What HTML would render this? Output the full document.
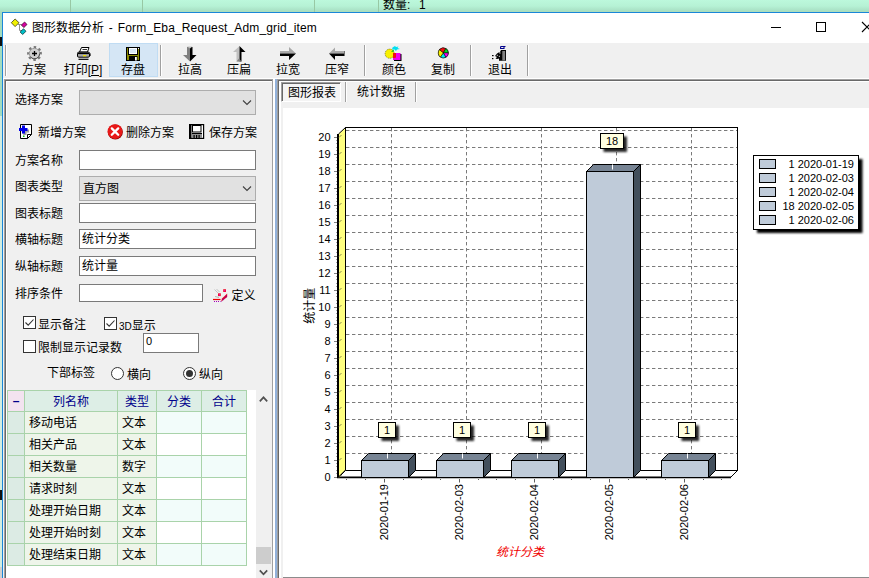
<!DOCTYPE html>
<html lang="zh-CN">
<head>
<meta charset="utf-8">
<title>图形数据分析</title>
<style>
*{box-sizing:border-box;margin:0;padding:0}
html,body{width:869px;height:578px;overflow:hidden}
body{position:relative;background:#b9f2d3;font-family:"Liberation Sans","Noto Sans CJK SC",sans-serif;font-size:12px;color:#000;line-height:14px}
.abs{position:absolute}
.t{position:absolute;white-space:nowrap;line-height:14px;height:14px}
#bgtop{left:0;top:0;width:869px;height:12px;background:linear-gradient(#bcf8dc 0%,#b6f2d5 50%,#a8e0c4 90%,#b0dcb8 100%)}
.bgl{position:absolute;top:0;width:1px;height:12px;background:#98c8a4}
#win{left:2px;top:12px;width:880px;height:580px;background:#f0f0f0;border:1px solid #1a86d8}
#title{left:3px;top:13px;width:866px;height:30px;background:#fff}
#toolbar{left:3px;top:43px;width:866px;height:36px;background:#f0f0f0}
.tb{position:absolute;top:63px;height:14px;line-height:14px;white-space:nowrap;font-size:12px;text-align:center}
.sep{position:absolute;top:45px;width:2px;height:31px;border-left:1px solid #a0a0a0;border-right:1px solid #fff}
.inp{position:absolute;background:#fff;border:1px solid #7a7a7a;height:20px}
.cmb{position:absolute;background:#e1e1e1;border:1px solid #adadad}
.lbl{margin-top:1px;position:absolute;white-space:nowrap;line-height:14px;height:14px;font-size:12px}
.cb{position:absolute;width:13px;height:13px;border:1px solid #333;background:#fff}
.rd{position:absolute;width:13px;height:13px;border:1px solid #333;background:#fff;border-radius:50%}
#grid{left:7px;top:390px;width:240px;height:176px}
.gh{position:absolute;top:390px;height:22px;border:1px solid #a9d3aa;background:#ddeee6;color:#00008b;text-align:center;line-height:20px;padding-top:1px;font-size:12px}
.gc{position:absolute;height:23px;border:1px solid #a9d3aa;line-height:21px;font-size:12px;padding-left:4px;padding-top:1px;white-space:nowrap}
</style>
</head>
<body>
<div class="abs" id="bgtop"></div>
<div class="bgl" style="left:70px"></div><div class="bgl" style="left:142px"></div><div class="bgl" style="left:314px"></div><div class="bgl" style="left:378px"></div>
<div class="t" style="left:383px;top:-2px;font-size:12px">数量<span style="letter-spacing:2.700px">: </span>1</div>
<div class="abs" style="left:0;top:12px;width:2px;height:104px;background:#a3dcbf"></div><div class="abs" style="left:0;top:116px;width:2px;height:451px;background:#d2ede1"></div><div class="abs" style="left:0;top:567px;width:2px;height:11px;background:#d0d0d0"></div>
<div class="abs" style="left:0;top:37px;width:2px;height:9px;background:#101010"></div><div class="abs" style="left:0;top:490px;width:2px;height:10px;background:#101010"></div>
<div class="abs" id="win"></div>
<div class="abs" id="title"></div>
<!-- title icon -->
<svg class="abs" style="left:10px;top:18px" width="20" height="20" viewBox="10 18 20 20">
<path d="M18 24.500 H22 M19.500 24.500 V30.500 H22" fill="none" stroke="#909090" stroke-width="1"/>
<path d="M11.300 22.700 L15.100 19 L19 22.700 L15.100 26.600 Z" fill="#f0f000" stroke="#202000" stroke-width="0.700"/>
<path d="M21.400 25 L24.600 22 L27 24.500 L23.800 27.600 Z" fill="#d800a0" stroke="#300020" stroke-width="0.700"/>
<path d="M20.100 32 L23.500 28.800 L26 31.300 L22.600 34.500 Z" fill="#00c0c8" stroke="#002828" stroke-width="0.700"/>
</svg>
<div class="t" id="ttext" style="left:32px;top:20px;font-size:12px;line-height:16px;height:16px">图形数据分析<span style="letter-spacing:0.15px;word-spacing:1.3px"> - Form_Eba_Request_Adm_grid_item</span></div>
<!-- window buttons -->
<div class="abs" style="left:771px;top:27px;width:10px;height:1px;background:#000"></div>
<div class="abs" style="left:816px;top:22px;width:10px;height:10px;border:1px solid #000"></div>
<svg class="abs" style="left:861px;top:21px" width="12" height="12"><path d="M1 1 L11 11 M11 1 L1 11" stroke="#000" stroke-width="1.1" fill="none"/></svg>

<div class="abs" id="toolbar"></div>
<div class="abs" style="left:5px;top:45px;width:2px;height:31px;border-left:1px solid #a0a0a0;border-right:1px solid #fff"></div>
<div class="abs" style="left:109px;top:43px;width:49px;height:34px;background:#d5e6f5;border:1px solid #c0dcf3"></div>
<div class="tb" style="left:10px;width:48px">方案</div>
<div class="tb" style="left:59px;width:48px">打印[<u>P</u>]</div>
<div class="tb" style="left:109px;width:48px">存盘</div>
<div class="tb" style="left:166px;width:48px">拉高</div>
<div class="tb" style="left:215px;width:48px">压扁</div>
<div class="tb" style="left:264px;width:48px">拉宽</div>
<div class="tb" style="left:313px;width:48px">压窄</div>
<div class="tb" style="left:370px;width:48px">颜色</div>
<div class="tb" style="left:419px;width:48px">复制</div>
<div class="tb" style="left:476px;width:48px">退出</div>
<div class="sep" style="left:160px"></div>
<div class="sep" style="left:364px"></div>
<div class="sep" style="left:470px"></div>
<div class="sep" style="left:527px"></div>
<!-- toolbar icons -->
<svg class="abs" id="tbicons" style="left:0;top:43px" width="560" height="20" viewBox="0 43 560 20">
<!-- 方案 gear -->
<circle cx="34.500" cy="53.500" r="6.300" fill="none" stroke="#787878" stroke-width="2.200" stroke-dasharray="2.400 2.550" transform="rotate(-14 34.500 53.500)"/>
<circle cx="34.500" cy="53.500" r="5.200" fill="#cfcfcf" stroke="#8a8a8a" stroke-width="0.800"/>
<path d="M30.500 57 A5.200 5.200 0 0 0 39.700 53.500" fill="none" stroke="#505050" stroke-width="1"/>
<path d="M34.500 51 V56 M32 53.500 H37" stroke="#000" stroke-width="1.300" fill="none"/>
<!-- 打印 printer -->
<path d="M81.500 47.500 H89 L87.500 52 H79.500 Z" fill="#fff" stroke="#000" stroke-width="1"/>
<path d="M82.500 49.500 H87" stroke="#000" stroke-width="0.800"/>
<rect x="77.500" y="52.200" width="12" height="5" rx="1.200" fill="#a8a8a8" stroke="#000" stroke-width="1"/>
<path d="M78 53.500 H89" stroke="#000" stroke-width="1.200"/>
<rect x="83" y="55" width="3.200" height="1.300" fill="#f0e000"/>
<path d="M89.500 52.500 L90.500 54 V56" stroke="#404040" stroke-width="0.800" fill="none"/>
<path d="M78.500 59.300 H88.500" stroke="#000" stroke-width="1.200"/>
<!-- 存盘 floppy -->
<rect x="126.500" y="47.500" width="13" height="13" fill="#8c8c00" stroke="#000" stroke-width="1"/>
<rect x="128" y="47" width="10" height="8" fill="#000"/>
<rect x="129" y="48" width="8" height="6" fill="#fff"/>
<rect x="130" y="49" width="6" height="4" fill="#d8e6f2"/>
<rect x="138" y="48" width="1" height="1" fill="#fff"/>
<rect x="129" y="56" width="8.500" height="4.500" fill="#000"/>
<rect x="135" y="57" width="1.800" height="3.500" fill="#fff"/>
<!-- 拉高 down arrow -->
<path d="M187 47 H190 V61.500 L183 55 H187 Z" fill="#808080"/>
<path d="M190 47 H192.500 V55 H196.500 L190 61.500 Z" fill="#000"/>
<path d="M187 46.500 H192.500 L190 48.500 Z" fill="#c0c0c0"/>
<!-- 压扁 up arrow -->
<path d="M239.500 46 L233 52 H236.500 V61.500 H239.500 Z" fill="#c0c0c0"/>
<path d="M239.500 46 L245.500 52 H241.500 V61.500 H239.500 Z" fill="#000"/>
<path d="M236.500 61.500 L239 58.500 L241.500 61.500 Z" fill="#808080"/>
<!-- 拉宽 right arrow -->
<path d="M280 51 H289 V47 L296 53.600 H280 Z" fill="#a8a8a8"/>
<path d="M280 53.600 H296 L289 60 V56 H280 Z" fill="#000"/>
<!-- 压窄 left arrow -->
<path d="M345 51 H335 V47.500 L329 53.600 H345 Z" fill="#a8a8a8"/>
<path d="M345 53.600 H329 L335 60 V56 H345 Z" fill="#000"/>
<path d="M344 51 H345 V56 H344 Z" fill="#707070"/>
<!-- 颜色 -->
<rect x="394" y="54" width="7.500" height="7" fill="#000"/>
<rect x="393" y="53" width="7.500" height="7" fill="#f000f0"/>
<circle cx="389.700" cy="53.700" r="4.600" fill="#f8f000" stroke="#505000" stroke-width="0.700" stroke-dasharray="1 1"/>
<path d="M393 53 H396 V57.500 A4.600 4.600 0 0 1 393 58 Z" fill="#f01010"/>
<path d="M391 52 L393.500 49.500 L394 51.500 Z" fill="#00c020"/>
<path d="M392.500 47.500 L395 46 L396 47 L398.500 46.500 L397.500 48 L400 49 L397 49.500 L396 51 L394.500 49.500 L392 49.500 Z" fill="#00e0f0"/>
<!-- 复制 pie -->
<circle cx="443.3" cy="52.9" r="5.400" fill="#303030"/>
<path d="M443.3 52.9 L439.47 49.69 A5 5 0 0 1 445.80 48.57 Z" fill="#f01010" stroke="#000" stroke-width="0.500"/>
<path d="M443.3 52.9 L445.80 48.57 A5 5 0 0 1 448.30 52.90 Z" fill="#00d820" stroke="#000" stroke-width="0.500"/>
<path d="M443.3 52.9 L448.30 52.90 A5 5 0 0 1 445.80 57.23 Z" fill="#f000f0" stroke="#000" stroke-width="0.500"/>
<path d="M443.3 52.9 L445.80 57.23 A5 5 0 0 1 440.43 57.00 Z" fill="#00e8f0" stroke="#000" stroke-width="0.500"/>
<path d="M443.3 52.9 L440.43 57.00 A5 5 0 0 1 439.47 49.69 Z" fill="#f8f000" stroke="#000" stroke-width="0.500"/>
<!-- 退出 door -->
<path d="M500.600 46.500 H505.500 M500.600 46.500 V48.500 H504 V46.500" fill="none" stroke="#00008b" stroke-width="1.100"/>
<path d="M499 60.700 V54 L501 50 H506 V60.700 Z" fill="#000"/>
<rect x="502.300" y="51" width="2.800" height="9.500" fill="#808080"/>
<path d="M495 56 L497 53.500 L499.500 52 V58.500 L497 59 L495.500 58.500 L497 57 Z" fill="#000"/>
<rect x="499.500" y="52.500" width="1" height="1" fill="#fff"/><rect x="496.800" y="54.800" width="1" height="1" fill="#fff"/><rect x="498.800" y="55.800" width="1" height="1" fill="#fff"/>
<rect x="492" y="55" width="1.600" height="1.200" fill="#000"/><rect x="492" y="58" width="1.400" height="1.200" fill="#000"/>
</svg>

<!-- left panel -->
<div class="abs" style="left:4px;top:79px;width:269px;height:505px;border-left:1px solid #a0a0a0;border-top:1px solid #a0a0a0;border-right:1px solid #a0a0a0;box-shadow:inset 1px 1px 0 #696969,inset 2px 2px 0 #fff"></div>
<div class="lbl" style="left:15px;top:92px">选择方案</div>
<div class="cmb" style="left:79px;top:90px;width:177px;height:25px"></div>
<svg class="abs" style="left:242px;top:99px" width="10" height="8"><path d="M1 1.500 L5 5.500 L9 1.500" fill="none" stroke="#404040" stroke-width="1.1"/></svg>

<!-- 新增/删除/保存 -->
<svg class="abs" style="left:17px;top:122px" width="18" height="18" viewBox="17 122 18 18">
<path d="M20.500 124.500 H31.500 V134.500 L27.500 138.500 H20.500 Z" fill="#fff" stroke="#000" stroke-width="1"/>
<path d="M27.500 138.500 V134.500 H31.500" fill="none" stroke="#000" stroke-width="1"/>
<path d="M20.500 129.500 H29 V132.500 H26.500 V135 H23.500" fill="#a0a0a0"/>
<path d="M19 128 H22 V125.500 H25 V128 H27.500 V131 H25 V133.500 H22 V131 H19 Z" fill="#0000e8"/>
<rect x="23" y="135.500" width="1.500" height="1.500" fill="#00c000"/>
</svg>
<div class="lbl" style="left:38px;top:125px">新增方案</div>
<svg class="abs" style="left:106px;top:122px" width="19" height="19" viewBox="106 122 19 19">
<circle cx="115.300" cy="132" r="7.600" fill="#900000"/>
<circle cx="115" cy="131.600" r="7.400" fill="#e81818"/>
<path d="M111.800 128.400 L118.200 134.800 M118.200 128.400 L111.800 134.800" stroke="#fff" stroke-width="2.300" stroke-linecap="round"/>
</svg>
<div class="lbl" style="left:126px;top:125px">删除方案</div>
<svg class="abs" style="left:188px;top:122px" width="18" height="19" viewBox="188 122 18 19">
<rect x="189.600" y="124.600" width="14" height="13.800" fill="#fff" stroke="#000" stroke-width="1.200"/>
<rect x="190" y="125" width="1.500" height="13" fill="#000"/>
<rect x="192.500" y="125.500" width="8.500" height="6.500" fill="#fff" stroke="#000" stroke-width="1"/>
<rect x="192" y="134" width="10" height="4" fill="#909090"/>
<path d="M192 133.500 H202" stroke="#000" stroke-width="1"/>
<rect x="193.500" y="135" width="1.200" height="3" fill="#000"/><rect x="196" y="135" width="1.200" height="3" fill="#000"/><rect x="198.500" y="135" width="1.200" height="3" fill="#000"/>
</svg>
<div class="lbl" style="left:209px;top:125px">保存方案</div>

<div class="lbl" style="left:15px;top:153px">方案名称</div>
<div class="inp" style="left:79px;top:150px;width:177px"></div>
<div class="lbl" style="left:15px;top:179px">图表类型</div>
<div class="cmb" style="left:79px;top:176px;width:177px;height:25px"></div>
<div class="lbl" style="left:83px;top:181px">直方图</div>
<svg class="abs" style="left:242px;top:185px" width="10" height="8"><path d="M1 1.500 L5 5.500 L9 1.500" fill="none" stroke="#404040" stroke-width="1.1"/></svg>
<div class="lbl" style="left:15px;top:206px">图表标题</div>
<div class="inp" style="left:79px;top:203px;width:177px"></div>
<div class="lbl" style="left:15px;top:232px">横轴标题</div>
<div class="inp" style="left:79px;top:229px;width:177px"></div>
<div class="lbl" style="left:82px;top:231px">统计分类</div>
<div class="lbl" style="left:15px;top:259px">纵轴标题</div>
<div class="inp" style="left:79px;top:256px;width:177px"></div>
<div class="lbl" style="left:82px;top:258px">统计量</div>
<div class="lbl" style="left:15px;top:286px">排序条件</div>
<div class="inp" style="left:79px;top:284px;width:124px;height:18px"></div>
<svg class="abs" style="left:212px;top:287px" width="17" height="16" viewBox="212 287 17 16">
<path d="M214.500 289.500 L218 293 M216.500 289 L219.500 292" stroke="#c4c4c4" stroke-width="1" fill="none"/>
<path d="M215 296.500 L219 297.500" stroke="#b4b4b4" stroke-width="1" fill="none"/>
<rect x="218" y="293.300" width="2.800" height="2.800" fill="#f01030"/><rect x="219" y="294.300" width="1" height="1" fill="#f000f0"/>
<rect x="223.200" y="289.200" width="2.800" height="2.800" fill="#f01030"/><rect x="224.200" y="290.200" width="1" height="1" fill="#f000f0"/>
<path d="M213 299.500 H220.500" stroke="#f00000" stroke-width="1.200"/>
<path d="M214 301.500 H220.500" stroke="#a000c0" stroke-width="1" stroke-dasharray="1 1"/>
<path d="M221 301.800 L222 298.500 L227.200 293.600 V297 Z" fill="#e80028"/>
<path d="M222 300 L227 295.300 M221.600 301.500 L227 296.500" stroke="#5000c0" stroke-width="0.600" stroke-dasharray="1 1"/>
</svg>
<div class="lbl" style="left:231.500px;top:288px">定义</div>

<div class="cb" style="left:23px;top:316px"></div>
<svg class="abs" style="left:24px;top:317px" width="11" height="11"><path d="M1.500 5.500 L4.200 8.200 L9.500 2.500" fill="none" stroke="#333" stroke-width="1.100"/></svg>
<div class="lbl" style="left:38px;top:317px">显示备注</div>
<div class="cb" style="left:104px;top:317px"></div>
<svg class="abs" style="left:105px;top:318px" width="11" height="11"><path d="M1.500 5.500 L4.200 8.200 L9.500 2.500" fill="none" stroke="#333" stroke-width="1.100"/></svg>
<div class="lbl" style="left:119px;top:318px"><span style="font-size:10px">3D</span>显示</div>
<div class="cb" style="left:23px;top:340px"></div>
<div class="lbl" style="left:38px;top:340px">限制显示记录数</div>
<div class="inp" style="left:143px;top:333px;width:56px;height:20px"></div>
<div class="lbl" style="left:146px;top:333px;font-size:11px">0</div>
<div class="lbl" style="left:47px;top:365px">下部标签</div>
<div class="rd" style="left:111px;top:367px"></div>
<div class="lbl" style="left:127px;top:367px">横向</div>
<div class="rd" style="left:183px;top:367px"></div>
<div class="abs" style="left:186px;top:370px;width:7px;height:7px;border-radius:50%;background:#333"></div>
<div class="lbl" style="left:199px;top:367px">纵向</div>

<!-- grid -->
<div class="abs" style="left:7px;top:390px;width:265px;height:190px;background:#fff"></div>

<div class="gh" style="left:7px;width:18px;background:#f3e3f0;line-height:18px;font-weight:bold">–</div>
<div class="gh" style="left:24px;width:94px;background:#ddeee6">列名称</div>
<div class="gh" style="left:117px;width:40px;background:#ddeee6">类型</div>
<div class="gh" style="left:156px;width:46px;background:#ddeee6">分类</div>
<div class="gh" style="left:201px;width:46px;background:#ddeee6">合计</div>
<div class="gc" style="left:7px;top:411px;width:18px;background:#dcebe4"></div>
<div class="gc" style="left:24px;top:411px;width:94px;background:#eef5ea">移动电话</div>
<div class="gc" style="left:117px;top:411px;width:40px;background:#eef5ea">文本</div>
<div class="gc" style="left:156px;top:411px;width:46px;background:#f2fcfa"></div>
<div class="gc" style="left:201px;top:411px;width:46px;background:#f2fcfa"></div>
<div class="gc" style="left:7px;top:433px;width:18px;background:#dcebe4"></div>
<div class="gc" style="left:24px;top:433px;width:94px;background:#eef5ea">相关产品</div>
<div class="gc" style="left:117px;top:433px;width:40px;background:#eef5ea">文本</div>
<div class="gc" style="left:156px;top:433px;width:46px;background:#ffffff"></div>
<div class="gc" style="left:201px;top:433px;width:46px;background:#ffffff"></div>
<div class="gc" style="left:7px;top:455px;width:18px;background:#dcebe4"></div>
<div class="gc" style="left:24px;top:455px;width:94px;background:#eef5ea">相关数量</div>
<div class="gc" style="left:117px;top:455px;width:40px;background:#eef5ea">数字</div>
<div class="gc" style="left:156px;top:455px;width:46px;background:#f2fcfa"></div>
<div class="gc" style="left:201px;top:455px;width:46px;background:#f2fcfa"></div>
<div class="gc" style="left:7px;top:477px;width:18px;background:#dcebe4"></div>
<div class="gc" style="left:24px;top:477px;width:94px;background:#eef5ea">请求时刻</div>
<div class="gc" style="left:117px;top:477px;width:40px;background:#eef5ea">文本</div>
<div class="gc" style="left:156px;top:477px;width:46px;background:#ffffff"></div>
<div class="gc" style="left:201px;top:477px;width:46px;background:#ffffff"></div>
<div class="gc" style="left:7px;top:499px;width:18px;background:#dcebe4"></div>
<div class="gc" style="left:24px;top:499px;width:94px;background:#eef5ea">处理开始日期</div>
<div class="gc" style="left:117px;top:499px;width:40px;background:#eef5ea">文本</div>
<div class="gc" style="left:156px;top:499px;width:46px;background:#f2fcfa"></div>
<div class="gc" style="left:201px;top:499px;width:46px;background:#f2fcfa"></div>
<div class="gc" style="left:7px;top:521px;width:18px;background:#dcebe4"></div>
<div class="gc" style="left:24px;top:521px;width:94px;background:#eef5ea">处理开始时刻</div>
<div class="gc" style="left:117px;top:521px;width:40px;background:#eef5ea">文本</div>
<div class="gc" style="left:156px;top:521px;width:46px;background:#ffffff"></div>
<div class="gc" style="left:201px;top:521px;width:46px;background:#ffffff"></div>
<div class="gc" style="left:7px;top:543px;width:18px;background:#dcebe4"></div>
<div class="gc" style="left:24px;top:543px;width:94px;background:#eef5ea">处理结束日期</div>
<div class="gc" style="left:117px;top:543px;width:40px;background:#eef5ea">文本</div>
<div class="gc" style="left:156px;top:543px;width:46px;background:#f2fcfa"></div>
<div class="gc" style="left:201px;top:543px;width:46px;background:#f2fcfa"></div>

<!-- scrollbar -->
<div class="abs" style="left:256px;top:390px;width:16px;height:190px;background:#f0f0f0"></div>
<svg class="abs" style="left:258px;top:394px" width="12" height="10"><path d="M1.800 7.300 L5.500 3.300 L9.200 7.300" fill="none" stroke="#505050" stroke-width="1.700"/></svg>
<svg class="abs" style="left:258px;top:568px" width="12" height="10"><path d="M1.800 2.300 L5.500 6.300 L9.200 2.300" fill="none" stroke="#505050" stroke-width="1.700"/></svg>
<div class="abs" style="left:256px;top:547px;width:15px;height:17px;background:#cdcdcd"></div>

<!-- splitter -->
<div class="abs" style="left:273px;top:79px;width:2px;height:500px;background:#fff"></div>
<div class="abs" style="left:3px;top:78px;width:866px;height:1px;background:#fff"></div>
<div class="abs" style="left:275px;top:79px;width:2px;height:500px;background:#92b1da"></div>
<!-- right panel -->
<div class="abs" style="left:277px;top:79px;width:600px;height:510px;border-left:1px solid #a0a0a0;border-top:1px solid #a0a0a0;box-shadow:inset 1px 1px 0 #696969,inset 3px 2px 0 #fff;background:#f0f0f0"></div>
<div class="abs" style="left:281px;top:82px;width:60px;height:20px;border-left:1px solid #a0a0a0;border-top:1px solid #a0a0a0;border-right:1px solid #fff;border-bottom:1px solid #fff;background:#f4f4f4"></div>
<div class="abs" style="left:282px;top:83px;width:58px;height:18px;border-left:1px solid #696969;border-top:1px solid #696969"></div>
<div class="lbl" style="left:288px;top:85px">图形报表</div>
<div class="lbl" style="left:357px;top:84px">统计数据</div>
<div class="abs" style="left:345px;top:82px;width:2px;height:20px;border-left:1px solid #a0a0a0;border-right:1px solid #fff"></div>
<div class="abs" style="left:415px;top:82px;width:2px;height:20px;border-left:1px solid #a0a0a0;border-right:1px solid #fff"></div>
<div class="abs" style="left:283px;top:108px;width:590px;height:469px;background:#fff"></div>
<div class="abs" style="left:283px;top:577px;width:590px;height:1px;background:#8c8c8c"></div>
<svg class="abs" id="chart" style="left:283px;top:107px" width="586" height="470" viewBox="283 107 586 470" font-family="'Liberation Sans','Noto Sans CJK SC',sans-serif" font-size="11">
<rect x="345.5" y="127.5" width="392" height="343" fill="#fff" stroke="#000" stroke-width="1"/>
<path d="M346 453.5 H737" stroke="#7a7a7a" stroke-width="1" stroke-dasharray="3.400 2.600" fill="none"/>
<path d="M346 436.5 H737" stroke="#7a7a7a" stroke-width="1" stroke-dasharray="3.400 2.600" fill="none"/>
<path d="M346 419.5 H737" stroke="#7a7a7a" stroke-width="1" stroke-dasharray="3.400 2.600" fill="none"/>
<path d="M346 402.5 H737" stroke="#7a7a7a" stroke-width="1" stroke-dasharray="3.400 2.600" fill="none"/>
<path d="M346 385.5 H737" stroke="#7a7a7a" stroke-width="1" stroke-dasharray="3.400 2.600" fill="none"/>
<path d="M346 368.5 H737" stroke="#7a7a7a" stroke-width="1" stroke-dasharray="3.400 2.600" fill="none"/>
<path d="M346 351.5 H737" stroke="#7a7a7a" stroke-width="1" stroke-dasharray="3.400 2.600" fill="none"/>
<path d="M346 334.5 H737" stroke="#7a7a7a" stroke-width="1" stroke-dasharray="3.400 2.600" fill="none"/>
<path d="M346 317.5 H737" stroke="#7a7a7a" stroke-width="1" stroke-dasharray="3.400 2.600" fill="none"/>
<path d="M346 300.5 H737" stroke="#7a7a7a" stroke-width="1" stroke-dasharray="3.400 2.600" fill="none"/>
<path d="M346 283.5 H737" stroke="#7a7a7a" stroke-width="1" stroke-dasharray="3.400 2.600" fill="none"/>
<path d="M346 266.5 H737" stroke="#7a7a7a" stroke-width="1" stroke-dasharray="3.400 2.600" fill="none"/>
<path d="M346 249.5 H737" stroke="#7a7a7a" stroke-width="1" stroke-dasharray="3.400 2.600" fill="none"/>
<path d="M346 232.5 H737" stroke="#7a7a7a" stroke-width="1" stroke-dasharray="3.400 2.600" fill="none"/>
<path d="M346 215.5 H737" stroke="#7a7a7a" stroke-width="1" stroke-dasharray="3.400 2.600" fill="none"/>
<path d="M346 198.5 H737" stroke="#7a7a7a" stroke-width="1" stroke-dasharray="3.400 2.600" fill="none"/>
<path d="M346 181.5 H737" stroke="#7a7a7a" stroke-width="1" stroke-dasharray="3.400 2.600" fill="none"/>
<path d="M346 164.5 H737" stroke="#7a7a7a" stroke-width="1" stroke-dasharray="3.400 2.600" fill="none"/>
<path d="M346 147.5 H737" stroke="#7a7a7a" stroke-width="1" stroke-dasharray="3.400 2.600" fill="none"/>
<path d="M346 130.5 H737" stroke="#7a7a7a" stroke-width="1" stroke-dasharray="3.400 2.600" fill="none"/>
<path d="M391.5 128 V470" stroke="#7a7a7a" stroke-width="1" stroke-dasharray="3.400 2.600" fill="none"/>
<path d="M466.5 128 V470" stroke="#7a7a7a" stroke-width="1" stroke-dasharray="3.400 2.600" fill="none"/>
<path d="M541.5 128 V470" stroke="#7a7a7a" stroke-width="1" stroke-dasharray="3.400 2.600" fill="none"/>
<path d="M616.5 128 V470" stroke="#7a7a7a" stroke-width="1" stroke-dasharray="3.400 2.600" fill="none"/>
<path d="M691.5 128 V470" stroke="#7a7a7a" stroke-width="1" stroke-dasharray="3.400 2.600" fill="none"/>
<path d="M338.5 134 L345.5 127.5 V470 L338.5 477 Z" fill="#ffff80" stroke="#000" stroke-width="1"/>
<path d="M338 134 V478" stroke="#000" stroke-width="2"/>
<path d="M338.5 477.5 L345.5 470.5 H737.5 L730.5 477.5 Z" fill="#fff" stroke="#000" stroke-width="1"/>
<path d="M337 477.4 H731" stroke="#000" stroke-width="1.8"/>
<path d="M334 477.5 H337" stroke="#808080" stroke-width="1"/>
<text x="330.6" y="481" text-anchor="end">0</text>
<path d="M339 477.5 L341.5 475" stroke="#8c8c50" stroke-width="1"/>
<rect x="336" y="473" width="1" height="1" fill="#a8a8a8"/>
<rect x="336" y="470" width="1" height="1" fill="#a8a8a8"/>
<rect x="336" y="466" width="1" height="1" fill="#a8a8a8"/>
<rect x="336" y="463" width="1" height="1" fill="#a8a8a8"/>
<path d="M334 460.5 H337" stroke="#808080" stroke-width="1"/>
<text x="330.6" y="464" text-anchor="end">1</text>
<path d="M339 460.5 L341.5 458" stroke="#8c8c50" stroke-width="1"/>
<rect x="336" y="456" width="1" height="1" fill="#a8a8a8"/>
<rect x="336" y="453" width="1" height="1" fill="#a8a8a8"/>
<rect x="336" y="449" width="1" height="1" fill="#a8a8a8"/>
<rect x="336" y="446" width="1" height="1" fill="#a8a8a8"/>
<path d="M334 443.5 H337" stroke="#808080" stroke-width="1"/>
<text x="330.6" y="447" text-anchor="end">2</text>
<path d="M339 443.5 L341.5 441" stroke="#8c8c50" stroke-width="1"/>
<rect x="336" y="439" width="1" height="1" fill="#a8a8a8"/>
<rect x="336" y="436" width="1" height="1" fill="#a8a8a8"/>
<rect x="336" y="432" width="1" height="1" fill="#a8a8a8"/>
<rect x="336" y="429" width="1" height="1" fill="#a8a8a8"/>
<path d="M334 426.5 H337" stroke="#808080" stroke-width="1"/>
<text x="330.6" y="430" text-anchor="end">3</text>
<path d="M339 426.5 L341.5 424" stroke="#8c8c50" stroke-width="1"/>
<rect x="336" y="422" width="1" height="1" fill="#a8a8a8"/>
<rect x="336" y="419" width="1" height="1" fill="#a8a8a8"/>
<rect x="336" y="415" width="1" height="1" fill="#a8a8a8"/>
<rect x="336" y="412" width="1" height="1" fill="#a8a8a8"/>
<path d="M334 409.5 H337" stroke="#808080" stroke-width="1"/>
<text x="330.6" y="413" text-anchor="end">4</text>
<path d="M339 409.5 L341.5 407" stroke="#8c8c50" stroke-width="1"/>
<rect x="336" y="405" width="1" height="1" fill="#a8a8a8"/>
<rect x="336" y="402" width="1" height="1" fill="#a8a8a8"/>
<rect x="336" y="398" width="1" height="1" fill="#a8a8a8"/>
<rect x="336" y="395" width="1" height="1" fill="#a8a8a8"/>
<path d="M334 392.5 H337" stroke="#808080" stroke-width="1"/>
<text x="330.6" y="396" text-anchor="end">5</text>
<path d="M339 392.5 L341.5 390" stroke="#8c8c50" stroke-width="1"/>
<rect x="336" y="388" width="1" height="1" fill="#a8a8a8"/>
<rect x="336" y="385" width="1" height="1" fill="#a8a8a8"/>
<rect x="336" y="381" width="1" height="1" fill="#a8a8a8"/>
<rect x="336" y="378" width="1" height="1" fill="#a8a8a8"/>
<path d="M334 375.5 H337" stroke="#808080" stroke-width="1"/>
<text x="330.6" y="379" text-anchor="end">6</text>
<path d="M339 375.5 L341.5 373" stroke="#8c8c50" stroke-width="1"/>
<rect x="336" y="371" width="1" height="1" fill="#a8a8a8"/>
<rect x="336" y="368" width="1" height="1" fill="#a8a8a8"/>
<rect x="336" y="364" width="1" height="1" fill="#a8a8a8"/>
<rect x="336" y="361" width="1" height="1" fill="#a8a8a8"/>
<path d="M334 358.5 H337" stroke="#808080" stroke-width="1"/>
<text x="330.6" y="362" text-anchor="end">7</text>
<path d="M339 358.5 L341.5 356" stroke="#8c8c50" stroke-width="1"/>
<rect x="336" y="354" width="1" height="1" fill="#a8a8a8"/>
<rect x="336" y="351" width="1" height="1" fill="#a8a8a8"/>
<rect x="336" y="347" width="1" height="1" fill="#a8a8a8"/>
<rect x="336" y="344" width="1" height="1" fill="#a8a8a8"/>
<path d="M334 341.5 H337" stroke="#808080" stroke-width="1"/>
<text x="330.6" y="345" text-anchor="end">8</text>
<path d="M339 341.5 L341.5 339" stroke="#8c8c50" stroke-width="1"/>
<rect x="336" y="337" width="1" height="1" fill="#a8a8a8"/>
<rect x="336" y="334" width="1" height="1" fill="#a8a8a8"/>
<rect x="336" y="330" width="1" height="1" fill="#a8a8a8"/>
<rect x="336" y="327" width="1" height="1" fill="#a8a8a8"/>
<path d="M334 324.5 H337" stroke="#808080" stroke-width="1"/>
<text x="330.6" y="328" text-anchor="end">9</text>
<path d="M339 324.5 L341.5 322" stroke="#8c8c50" stroke-width="1"/>
<rect x="336" y="320" width="1" height="1" fill="#a8a8a8"/>
<rect x="336" y="317" width="1" height="1" fill="#a8a8a8"/>
<rect x="336" y="313" width="1" height="1" fill="#a8a8a8"/>
<rect x="336" y="310" width="1" height="1" fill="#a8a8a8"/>
<path d="M334 307.5 H337" stroke="#808080" stroke-width="1"/>
<text x="330.6" y="311" text-anchor="end">10</text>
<path d="M339 307.5 L341.5 305" stroke="#8c8c50" stroke-width="1"/>
<rect x="336" y="303" width="1" height="1" fill="#a8a8a8"/>
<rect x="336" y="300" width="1" height="1" fill="#a8a8a8"/>
<rect x="336" y="296" width="1" height="1" fill="#a8a8a8"/>
<rect x="336" y="293" width="1" height="1" fill="#a8a8a8"/>
<path d="M334 290.5 H337" stroke="#808080" stroke-width="1"/>
<text x="330.6" y="294" text-anchor="end">11</text>
<path d="M339 290.5 L341.5 288" stroke="#8c8c50" stroke-width="1"/>
<rect x="336" y="286" width="1" height="1" fill="#a8a8a8"/>
<rect x="336" y="283" width="1" height="1" fill="#a8a8a8"/>
<rect x="336" y="279" width="1" height="1" fill="#a8a8a8"/>
<rect x="336" y="276" width="1" height="1" fill="#a8a8a8"/>
<path d="M334 273.5 H337" stroke="#808080" stroke-width="1"/>
<text x="330.6" y="277" text-anchor="end">12</text>
<path d="M339 273.5 L341.5 271" stroke="#8c8c50" stroke-width="1"/>
<rect x="336" y="269" width="1" height="1" fill="#a8a8a8"/>
<rect x="336" y="266" width="1" height="1" fill="#a8a8a8"/>
<rect x="336" y="262" width="1" height="1" fill="#a8a8a8"/>
<rect x="336" y="259" width="1" height="1" fill="#a8a8a8"/>
<path d="M334 256.5 H337" stroke="#808080" stroke-width="1"/>
<text x="330.6" y="260" text-anchor="end">13</text>
<path d="M339 256.5 L341.5 254" stroke="#8c8c50" stroke-width="1"/>
<rect x="336" y="252" width="1" height="1" fill="#a8a8a8"/>
<rect x="336" y="249" width="1" height="1" fill="#a8a8a8"/>
<rect x="336" y="245" width="1" height="1" fill="#a8a8a8"/>
<rect x="336" y="242" width="1" height="1" fill="#a8a8a8"/>
<path d="M334 239.5 H337" stroke="#808080" stroke-width="1"/>
<text x="330.6" y="243" text-anchor="end">14</text>
<path d="M339 239.5 L341.5 237" stroke="#8c8c50" stroke-width="1"/>
<rect x="336" y="235" width="1" height="1" fill="#a8a8a8"/>
<rect x="336" y="232" width="1" height="1" fill="#a8a8a8"/>
<rect x="336" y="228" width="1" height="1" fill="#a8a8a8"/>
<rect x="336" y="225" width="1" height="1" fill="#a8a8a8"/>
<path d="M334 222.5 H337" stroke="#808080" stroke-width="1"/>
<text x="330.6" y="226" text-anchor="end">15</text>
<path d="M339 222.5 L341.5 220" stroke="#8c8c50" stroke-width="1"/>
<rect x="336" y="218" width="1" height="1" fill="#a8a8a8"/>
<rect x="336" y="215" width="1" height="1" fill="#a8a8a8"/>
<rect x="336" y="211" width="1" height="1" fill="#a8a8a8"/>
<rect x="336" y="208" width="1" height="1" fill="#a8a8a8"/>
<path d="M334 205.5 H337" stroke="#808080" stroke-width="1"/>
<text x="330.6" y="209" text-anchor="end">16</text>
<path d="M339 205.5 L341.5 203" stroke="#8c8c50" stroke-width="1"/>
<rect x="336" y="201" width="1" height="1" fill="#a8a8a8"/>
<rect x="336" y="198" width="1" height="1" fill="#a8a8a8"/>
<rect x="336" y="194" width="1" height="1" fill="#a8a8a8"/>
<rect x="336" y="191" width="1" height="1" fill="#a8a8a8"/>
<path d="M334 188.5 H337" stroke="#808080" stroke-width="1"/>
<text x="330.6" y="192" text-anchor="end">17</text>
<path d="M339 188.5 L341.5 186" stroke="#8c8c50" stroke-width="1"/>
<rect x="336" y="184" width="1" height="1" fill="#a8a8a8"/>
<rect x="336" y="181" width="1" height="1" fill="#a8a8a8"/>
<rect x="336" y="177" width="1" height="1" fill="#a8a8a8"/>
<rect x="336" y="174" width="1" height="1" fill="#a8a8a8"/>
<path d="M334 171.5 H337" stroke="#808080" stroke-width="1"/>
<text x="330.6" y="175" text-anchor="end">18</text>
<path d="M339 171.5 L341.5 169" stroke="#8c8c50" stroke-width="1"/>
<rect x="336" y="167" width="1" height="1" fill="#a8a8a8"/>
<rect x="336" y="164" width="1" height="1" fill="#a8a8a8"/>
<rect x="336" y="160" width="1" height="1" fill="#a8a8a8"/>
<rect x="336" y="157" width="1" height="1" fill="#a8a8a8"/>
<path d="M334 154.5 H337" stroke="#808080" stroke-width="1"/>
<text x="330.6" y="158" text-anchor="end">19</text>
<path d="M339 154.5 L341.5 152" stroke="#8c8c50" stroke-width="1"/>
<rect x="336" y="150" width="1" height="1" fill="#a8a8a8"/>
<rect x="336" y="147" width="1" height="1" fill="#a8a8a8"/>
<rect x="336" y="143" width="1" height="1" fill="#a8a8a8"/>
<rect x="336" y="140" width="1" height="1" fill="#a8a8a8"/>
<path d="M334 137.5 H337" stroke="#808080" stroke-width="1"/>
<text x="330.6" y="141" text-anchor="end">20</text>
<path d="M339 137.5 L341.5 135" stroke="#8c8c50" stroke-width="1"/>
<text transform="translate(314.2,323.7) rotate(-90)" font-size="12">统计量</text>
<path d="M361.5 460.5 L368.5 453.5 H415.5 L408.5 460.5 Z" fill="#778494" stroke="#000" stroke-width="1"/>
<path d="M408.5 460.5 L415.5 453.5 V470.5 L408.5 477.5 Z" fill="#424f5c" stroke="#000" stroke-width="1"/>
<rect x="361.5" y="460.5" width="47" height="17.0" fill="#bfcbd9" stroke="#000" stroke-width="1"/>
<text transform="translate(388,540.3) rotate(-90)">2020-01-19</text>
<path d="M387.5 453.5 V458.5" stroke="#fff" stroke-width="1"/>
<rect x="381.5" y="425.5" width="17.5" height="15.5" fill="#000" opacity="0.85" filter="url(#bl)"/>
<rect x="378.5" y="422.5" width="17" height="15" fill="#ffffe1" stroke="#000" stroke-width="1"/>
<text x="387.0" y="434.0" text-anchor="middle">1</text>
<path d="M436.5 460.5 L443.5 453.5 H490.5 L483.5 460.5 Z" fill="#778494" stroke="#000" stroke-width="1"/>
<path d="M483.5 460.5 L490.5 453.5 V470.5 L483.5 477.5 Z" fill="#424f5c" stroke="#000" stroke-width="1"/>
<rect x="436.5" y="460.5" width="47" height="17.0" fill="#bfcbd9" stroke="#000" stroke-width="1"/>
<text transform="translate(463,540.3) rotate(-90)">2020-02-03</text>
<path d="M462.5 453.5 V458.5" stroke="#fff" stroke-width="1"/>
<rect x="456.5" y="425.5" width="17.5" height="15.5" fill="#000" opacity="0.85" filter="url(#bl)"/>
<rect x="453.5" y="422.5" width="17" height="15" fill="#ffffe1" stroke="#000" stroke-width="1"/>
<text x="462.0" y="434.0" text-anchor="middle">1</text>
<path d="M511.5 460.5 L518.5 453.5 H565.5 L558.5 460.5 Z" fill="#778494" stroke="#000" stroke-width="1"/>
<path d="M558.5 460.5 L565.5 453.5 V470.5 L558.5 477.5 Z" fill="#424f5c" stroke="#000" stroke-width="1"/>
<rect x="511.5" y="460.5" width="47" height="17.0" fill="#bfcbd9" stroke="#000" stroke-width="1"/>
<text transform="translate(538,540.3) rotate(-90)">2020-02-04</text>
<path d="M537.5 453.5 V458.5" stroke="#fff" stroke-width="1"/>
<rect x="531.5" y="425.5" width="17.5" height="15.5" fill="#000" opacity="0.85" filter="url(#bl)"/>
<rect x="528.5" y="422.5" width="17" height="15" fill="#ffffe1" stroke="#000" stroke-width="1"/>
<text x="537.0" y="434.0" text-anchor="middle">1</text>
<path d="M586.5 171.5 L593.5 164.5 H640.5 L633.5 171.5 Z" fill="#778494" stroke="#000" stroke-width="1"/>
<path d="M633.5 171.5 L640.5 164.5 V470.5 L633.5 477.5 Z" fill="#424f5c" stroke="#000" stroke-width="1"/>
<rect x="586.5" y="171.5" width="47" height="306.0" fill="#bfcbd9" stroke="#000" stroke-width="1"/>
<text transform="translate(613,540.3) rotate(-90)">2020-02-05</text>
<path d="M612.5 164.5 V169.5" stroke="#fff" stroke-width="1"/>
<rect x="603.5" y="136.5" width="23.5" height="15.5" fill="#000" opacity="0.85" filter="url(#bl)"/>
<rect x="600.5" y="133.5" width="23" height="15" fill="#ffffe1" stroke="#000" stroke-width="1"/>
<text x="612.0" y="145.0" text-anchor="middle">18</text>
<path d="M661.5 460.5 L668.5 453.5 H715.5 L708.5 460.5 Z" fill="#778494" stroke="#000" stroke-width="1"/>
<path d="M708.5 460.5 L715.5 453.5 V470.5 L708.5 477.5 Z" fill="#424f5c" stroke="#000" stroke-width="1"/>
<rect x="661.5" y="460.5" width="47" height="17.0" fill="#bfcbd9" stroke="#000" stroke-width="1"/>
<text transform="translate(688,540.3) rotate(-90)">2020-02-06</text>
<path d="M687.5 453.5 V458.5" stroke="#fff" stroke-width="1"/>
<rect x="681.5" y="425.5" width="17.5" height="15.5" fill="#000" opacity="0.85" filter="url(#bl)"/>
<rect x="678.5" y="422.5" width="17" height="15" fill="#ffffe1" stroke="#000" stroke-width="1"/>
<text x="687.0" y="434.0" text-anchor="middle">1</text>
<path d="M346.5 479 V480" stroke="#606060" stroke-width="1"/>
<path d="M365.5 479 V480" stroke="#606060" stroke-width="1"/>
<path d="M384.5 479 V482.5" stroke="#606060" stroke-width="1"/>
<path d="M403.5 479 V480" stroke="#606060" stroke-width="1"/>
<path d="M421.5 479 V480" stroke="#606060" stroke-width="1"/>
<path d="M440.5 479 V480" stroke="#606060" stroke-width="1"/>
<path d="M459.5 479 V482.5" stroke="#606060" stroke-width="1"/>
<path d="M478.5 479 V480" stroke="#606060" stroke-width="1"/>
<path d="M496.5 479 V480" stroke="#606060" stroke-width="1"/>
<path d="M515.5 479 V480" stroke="#606060" stroke-width="1"/>
<path d="M534.5 479 V482.5" stroke="#606060" stroke-width="1"/>
<path d="M553.5 479 V480" stroke="#606060" stroke-width="1"/>
<path d="M571.5 479 V480" stroke="#606060" stroke-width="1"/>
<path d="M590.5 479 V480" stroke="#606060" stroke-width="1"/>
<path d="M609.5 479 V482.5" stroke="#606060" stroke-width="1"/>
<path d="M628.5 479 V480" stroke="#606060" stroke-width="1"/>
<path d="M646.5 479 V480" stroke="#606060" stroke-width="1"/>
<path d="M665.5 479 V480" stroke="#606060" stroke-width="1"/>
<path d="M684.5 479 V482.5" stroke="#606060" stroke-width="1"/>
<path d="M703.5 479 V480" stroke="#606060" stroke-width="1"/>
<path d="M721.5 479 V480" stroke="#606060" stroke-width="1"/>
<text x="496" y="556" font-size="12" font-style="italic" fill="#f00000">统计分类</text>
<defs><filter id="bl" x="-20%" y="-20%" width="140%" height="140%"><feGaussianBlur stdDeviation="1"/></filter></defs>
<rect x="757" y="159" width="105.500" height="74" fill="#000" filter="url(#bl)"/>
<rect x="753.5" y="155.5" width="105" height="74" fill="#fff" stroke="#000" stroke-width="1"/>
<rect x="759.5" y="159.5" width="16" height="9" fill="#bfcbd9" stroke="#000" stroke-width="1"/>
<text x="854" y="168" text-anchor="end">1 2020-01-19</text>
<rect x="759.5" y="173.5" width="16" height="9" fill="#bfcbd9" stroke="#000" stroke-width="1"/>
<text x="854" y="182" text-anchor="end">1 2020-02-03</text>
<rect x="759.5" y="187.5" width="16" height="9" fill="#bfcbd9" stroke="#000" stroke-width="1"/>
<text x="854" y="196" text-anchor="end">1 2020-02-04</text>
<rect x="759.5" y="201.5" width="16" height="9" fill="#bfcbd9" stroke="#000" stroke-width="1"/>
<text x="854" y="210" text-anchor="end">18 2020-02-05</text>
<rect x="759.5" y="215.5" width="16" height="9" fill="#bfcbd9" stroke="#000" stroke-width="1"/>
<text x="854" y="224" text-anchor="end">1 2020-02-06</text>
</svg>
</body>
</html>
